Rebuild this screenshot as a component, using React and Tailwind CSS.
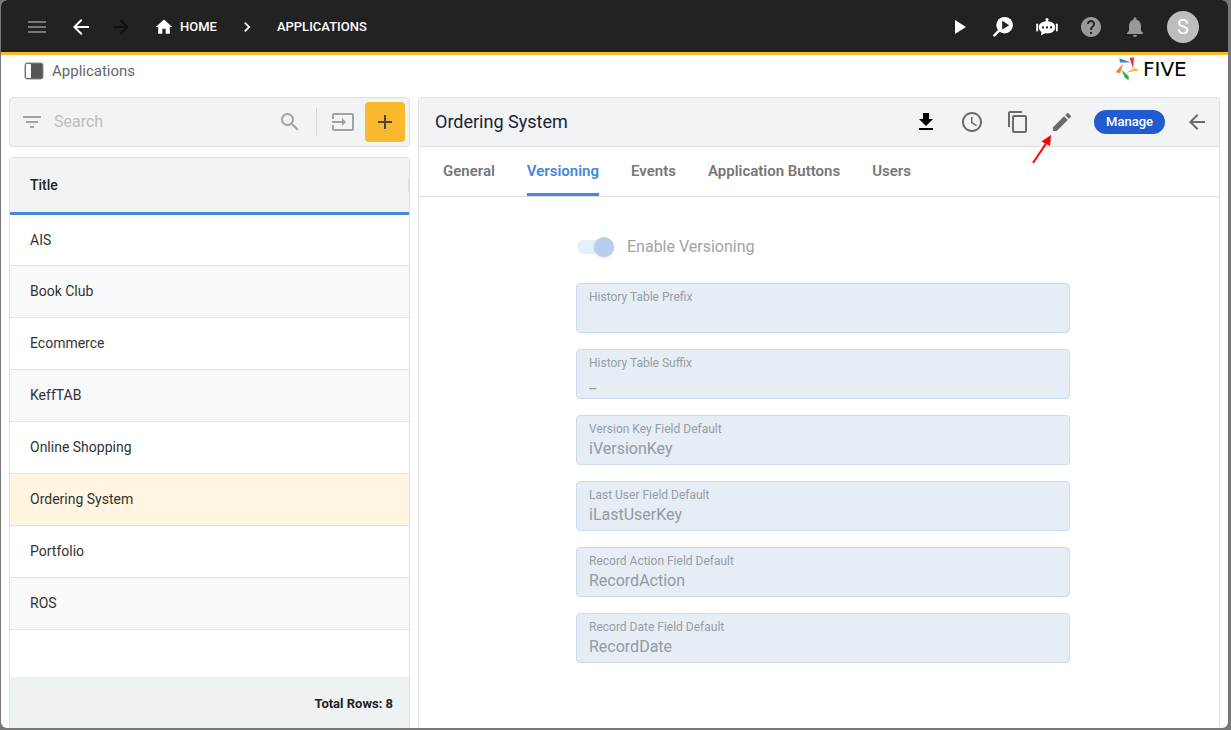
import { useState } from "react";
import clsx from "clsx";
import {
  MdAccessTime,
  MdAdd,
  MdArrowBack,
  MdArrowForward,
  MdChevronRight,
  MdContentCopy,
  MdEdit,
  MdFilterList,
  MdGetApp,
  MdHelp,
  MdHome,
  MdInput,
  MdMenu,
  MdNotifications,
  MdPlayArrow,
  MdSearch,
} from "react-icons/md";

const APPLICATIONS = [
  "AIS",
  "Book Club",
  "Ecommerce",
  "KeffTAB",
  "Online Shopping",
  "Ordering System",
  "Portfolio",
  "ROS",
];

const TABS = ["General", "Versioning", "Events", "Application Buttons", "Users"];

const FIELDS = [
  { id: "prefix", label: "History Table Prefix", value: "" },
  { id: "suffix", label: "History Table Suffix", value: "_" },
  { id: "version-key", label: "Version Key Field Default", value: "iVersionKey" },
  { id: "last-user", label: "Last User Field Default", value: "iLastUserKey" },
  { id: "record-action", label: "Record Action Field Default", value: "RecordAction" },
  { id: "record-date", label: "Record Date Field Default", value: "RecordDate" },
];

function InspectIcon() {
  return (
    <svg viewBox="0 0 24 24" className="size-6" aria-hidden="true">
      <path d="M8.6 15.2 3.4 20.4" stroke="currentColor" strokeWidth="2.6" strokeLinecap="round" />
      <circle cx="13.6" cy="10.2" r="8.3" fill="currentColor" />
      <path d="M11.2 5.8v8.8l7-4.4z" fill="#222" />
    </svg>
  );
}

function BotIcon() {
  return (
    <svg viewBox="0 0 24 24" className="size-6" fill="currentColor" aria-hidden="true">
      <circle cx="12" cy="4.4" r="1.5" />
      <path d="M11.3 5h1.4v3h-1.4z" />
      <path d="M12 6.2c-5 0-8.2 2.4-8.2 6 0 2 1 3.7 2.7 4.8L5.8 20.6l4.2-2.3c.6.1 1.3.1 2 .1 5 0 8.2-2.5 8.2-6.2s-3.2-6-8.2-6z" />
      <rect x="1.2" y="8.4" width="1.9" height="8" rx=".9" />
      <rect x="20.9" y="8.4" width="1.9" height="8" rx=".9" />
      <g fill="#222">
        <rect x="7" y="11.4" width="2" height="2" />
        <rect x="11" y="11.4" width="2" height="2" />
        <rect x="15" y="11.4" width="2" height="2" />
      </g>
    </svg>
  );
}

function PanelIcon() {
  return (
    <svg viewBox="0 0 20 18" className="h-[18px] w-5" aria-hidden="true">
      <rect x="1" y="1" width="18" height="16" rx="2" fill="#555" stroke="#888" />
      <rect x="2" y="2" width="5" height="14" rx="1" fill="#fff" />
    </svg>
  );
}

function FiveLogo() {
  return (
    <a href="#five" className="mt-0.5 flex items-center gap-1 text-black">
      <svg viewBox="0 0 24 24" className="size-6" aria-hidden="true">
        <path d="M4.4 1.2 5 5.4l11 .2z" fill="#3f7fd6" />
        <path d="M14.6 1 19 .2 18.2 12z" fill="#e5343d" />
        <path d="M8 6.4.6 15.2l4.6 1.1z" fill="#f58220" />
        <path d="M6.2 12.4 9.6 20.2l4 3.4.2-4.4z" fill="#3ea757" />
        <path d="M11.4 15.6 20 11l4 2.6z" fill="#fbb52a" />
      </svg>
      <span className="w-[60px] font-['DejaVu_Sans',sans-serif] text-xl leading-6">FIVE</span>
    </a>
  );
}

function IconButton({ label, className, children }) {
  return (
    <button type="button" aria-label={label} className={clsx("flex shrink-0 text-2xl", className)}>
      {children}
    </button>
  );
}

function TopBar() {
  return (
    <header className="flex h-[55px] items-center justify-between rounded-t-md border-b-3 border-[#fbb92c] bg-[#222] pt-0.5 pr-[29px] pl-6 text-white">
      <nav className="flex items-center">
        <IconButton label="Menu" className="text-[#777]">
          <MdMenu />
        </IconButton>
        <IconButton label="Back" className="ml-5">
          <MdArrowBack />
        </IconButton>
        <IconButton label="Forward" className="ml-4 text-[#111]">
          <MdArrowForward />
        </IconButton>
        <a href="#home" className="ml-[21px] flex items-center gap-1.5 text-[13px] font-medium">
          <MdHome className="size-5" />
          HOME
        </a>
        <MdChevronRight className="mx-5 size-5" />
        <a href="#applications" className="text-[13px] font-medium">
          APPLICATIONS
        </a>
      </nav>
      <div className="flex items-center gap-5">
        <IconButton label="Run">
          <MdPlayArrow />
        </IconButton>
        <IconButton label="Inspect">
          <InspectIcon />
        </IconButton>
        <IconButton label="Assistant">
          <BotIcon />
        </IconButton>
        <IconButton label="Help" className="text-[#999]">
          <MdHelp />
        </IconButton>
        <IconButton label="Notifications" className="text-[#999]">
          <MdNotifications />
        </IconButton>
        <button type="button" aria-label="Account" className="size-8 rounded-full bg-[#bdbdbd] text-xl">
          S
        </button>
      </div>
    </header>
  );
}

function SearchBar() {
  return (
    <div className="flex h-[50px] items-center rounded border border-[#dfe0e1] bg-[#f1f3f5] pr-1 pl-2.5 text-2xl text-[#9aa3aa]">
      <MdFilterList className="shrink-0" />
      <input
        type="search"
        aria-label="Search"
        placeholder="Search"
        className="mx-2.5 min-w-0 flex-1 text-base text-[#333] outline-none placeholder:text-[#bdbdbd]"
      />
      <IconButton label="Run search">
        <MdSearch />
      </IconButton>
      <span className="mx-3.5 h-7 w-px bg-[#d5d7d9]" />
      <IconButton label="Import">
        <MdInput />
      </IconButton>
      <button
        type="button"
        aria-label="Add application"
        className="ml-2.5 flex size-10 shrink-0 items-center justify-center rounded bg-[#f8b92d] text-2xl text-[#444]"
      >
        <MdAdd />
      </button>
    </div>
  );
}

function ApplicationList({ selected, onSelect }) {
  return (
    <div className="flex flex-1 flex-col rounded-t border border-b-0 border-[#dfe0e1]">
      <table className="w-full text-left text-sm text-[#333]">
        <thead>
          <tr className="h-[55px] border-b-3 border-[#4488d8] bg-[#f1f3f5]">
            <th className="pl-5 font-medium text-[#222]">
              <div className="flex items-center justify-between">
                Title
                <span className="h-3.5 w-px bg-[#dcdddf]" />
              </div>
            </th>
          </tr>
        </thead>
        <tbody>
          {APPLICATIONS.map((name) => (
            <tr
              key={name}
              onClick={() => onSelect(name)}
              className={clsx(
                "h-[52px] cursor-pointer border-b border-[#e2e3e4]",
                name === selected ? "bg-[#fff5e1]" : "even:bg-[#f8f9fb]"
              )}
            >
              <td className="px-5">{name}</td>
            </tr>
          ))}
        </tbody>
      </table>
      <div className="mt-auto flex h-[51px] items-center justify-end bg-[#eef2f3] px-4 pt-0.5 text-[13px] font-bold text-[#222]">
        Total Rows: {APPLICATIONS.length}
      </div>
    </div>
  );
}

function DetailHeader({ title }) {
  return (
    <div className="flex h-[49px] items-center justify-between rounded-t border-b border-[#dfe0e1] bg-[#f1f3f5] pr-2.5 pl-4 text-[#6b6b6b]">
      <h1 className="text-lg text-[#1b2333]">{title}</h1>
      <div className="flex items-center gap-5">
        <div className="flex items-center gap-[22px]">
          <IconButton label="Download" className="text-black">
            <MdGetApp />
          </IconButton>
          <IconButton label="History">
            <MdAccessTime />
          </IconButton>
          <IconButton label="Copy">
            <MdContentCopy />
          </IconButton>
        </div>
        <div className="relative">
          <IconButton label="Edit">
            <MdEdit />
          </IconButton>
          <svg viewBox="0 0 20 30" className="absolute top-6 right-[22px] h-[30px] w-5" aria-hidden="true">
            <path d="M1 29 15 8" stroke="#f00" strokeWidth="2" />
            <path d="M19 1 9.5 7.5 18 12z" fill="#f00" />
          </svg>
        </div>
        <button type="button" className="h-6 rounded-full bg-[#225bd0] px-3 text-[13px] font-medium text-white">
          Manage
        </button>
        <IconButton label="Close">
          <MdArrowBack />
        </IconButton>
      </div>
    </div>
  );
}

function VersioningForm() {
  return (
    <form className="mx-auto flex w-full max-w-[502px] flex-col gap-4 pt-[38px] pb-8 pl-2">
      <label className="mb-2 flex items-center gap-3 text-base text-[#a3a3a3]">
        <span className="relative ml-px flex h-6 w-[38px] items-center">
          <input type="checkbox" defaultChecked disabled className="peer sr-only" />
          <span className="h-3.5 w-[34px] rounded-full bg-[#e6effa]" />
          <span className="absolute left-0 size-5 rounded-full bg-[#b7cfef] shadow-sm peer-checked:left-[17px]" />
        </span>
        Enable Versioning
      </label>
      {FIELDS.map(({ id, label, value }) => (
        <div key={id} className="h-[50px] rounded border border-[#c9dcee] bg-[#e6edf5] px-3 pt-[5px]">
          <label htmlFor={id} className="block text-xs leading-4 text-[#969ea6]">
            {label}
          </label>
          <input
            id={id}
            type="text"
            defaultValue={value}
            disabled
            className="block h-6 w-full text-base text-[#939aa1]"
          />
        </div>
      ))}
    </form>
  );
}

export default function App() {
  const [selected, setSelected] = useState("Ordering System");
  const [tab, setTab] = useState("Versioning");

  return (
    <div className="flex min-h-screen flex-col bg-[#777] pr-[3px] pb-0.5 pl-px font-[Roboto,sans-serif]">
      <div className="flex flex-1 flex-col rounded-md bg-white">
        <TopBar />
        <div className="flex h-[42px] items-start justify-between pr-[25px] pl-[23px]">
          <button type="button" className="flex h-8 items-center gap-2 text-[15px] text-[#666]">
            <PanelIcon />
            Applications
          </button>
          <FiveLogo />
        </div>
        <main className="grid flex-1 grid-cols-[1fr_2fr] gap-2 px-2">
          <aside className="flex min-w-0 flex-col gap-2.5">
            <SearchBar />
            <ApplicationList selected={selected} onSelect={setSelected} />
          </aside>
          <section className="min-w-0 rounded-t border border-b-0 border-[#dfe0e1]">
            <DetailHeader title={selected} />
            <div role="tablist" className="flex h-[50px] gap-8 border-b border-[#dfe0e1] px-6">
              {TABS.map((name) => (
                <button
                  key={name}
                  type="button"
                  role="tab"
                  aria-selected={name === tab}
                  onClick={() => setTab(name)}
                  className={clsx(
                    "border-b-3 pt-0.5 text-[15px] font-semibold",
                    name === tab ? "border-[#4488d8] text-[#4488d8]" : "border-transparent text-[#777]"
                  )}
                >
                  {name}
                </button>
              ))}
            </div>
            {tab === "Versioning" && <VersioningForm />}
          </section>
        </main>
      </div>
    </div>
  );
}
